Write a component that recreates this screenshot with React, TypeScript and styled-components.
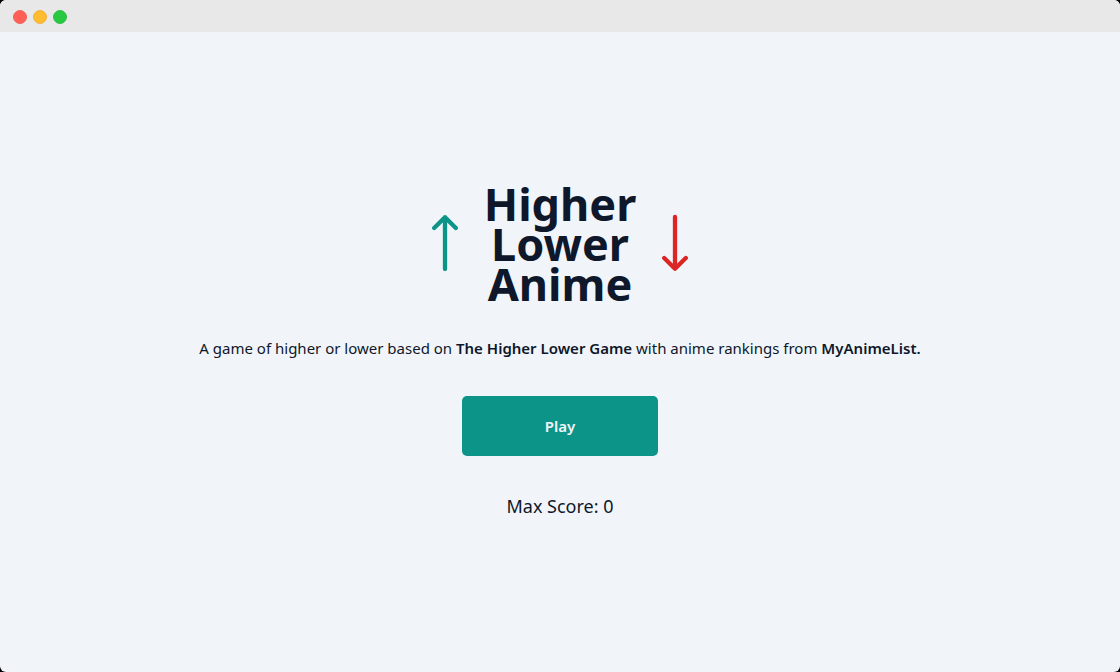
import React from "react";
import styled, { createGlobalStyle } from "styled-components";

const GlobalStyle = createGlobalStyle`
  *, *::before, *::after { box-sizing: border-box; }
  body {
    margin: 0;
    background: #000;
    color: #0f172a;
    font-family: "Noto Sans", sans-serif;
    font-size: 15px;
    line-height: 24px;
  }
`;

const Window = styled.div`
  display: flex;
  flex-direction: column;
  min-height: 100vh;
  border-radius: 6px;
  overflow: hidden;
  background: #f1f5f9;
`;

const TitleBar = styled.header`
  display: flex;
  align-items: center;
  gap: 6px;
  height: 32px;
  padding: 2px 13px 0;
  background: #e8e8e8;
`;

const Dot = styled.span<{ $fill: string; $edge: string }>`
  width: 14px;
  height: 14px;
  border-radius: 50%;
  background: ${(p) => p.$fill};
  border: 1px solid ${(p) => p.$edge};
`;

const Main = styled.main`
  flex: 1;
  display: flex;
  flex-direction: column;
  align-items: center;
  justify-content: center;
  gap: 36px;
  padding: 16px;
  text-align: center;
`;

const Intro = styled.section`
  display: flex;
  flex-direction: column;
  align-items: center;
  gap: 32px;
`;

const Hero = styled.div`
  display: flex;
  align-items: center;
  gap: 7px;
`;

const Title = styled.h1`
  display: flex;
  flex-direction: column;
  margin: 0;
  font-size: 45px;
  font-weight: 700;
  line-height: 40px;
`;

const Arrow = styled.svg<{ $color: string }>`
  width: 64px;
  height: 64px;
  fill: none;
  stroke: ${(p) => p.$color};
  stroke-width: 4.3;
  stroke-linecap: round;
  stroke-linejoin: round;
`;

const Text = styled.p`
  margin: 0;
`;

const SiteLink = styled.a`
  color: inherit;
  font-weight: 600;
  text-decoration: none;
`;

const PlayButton = styled.button`
  width: 196px;
  height: 60px;
  border: 0;
  border-radius: 5px;
  background: #0d9488;
  color: #f1f5f9;
  font: inherit;
  font-weight: 600;
  cursor: pointer;
`;

const Score = styled.p`
  margin: 0;
  font-size: 18px;
  line-height: 28px;
`;

export default function App() {
  return (
    <Window>
      <GlobalStyle />
      <TitleBar>
        <Dot $fill="#ff5f57" $edge="#f0645c" />
        <Dot $fill="#febc2e" $edge="#f0b23e" />
        <Dot $fill="#28c840" $edge="#32bf48" />
      </TitleBar>
      <Main>
        <Intro>
          <Hero>
            <Arrow $color="#0d9488" viewBox="0 0 64 64" aria-hidden="true">
              <path d="M21.2 16L32 5.2L42.8 16M32 5.2V57" />
            </Arrow>
            <Title>
              <span>Higher</span>
              <span>Lower</span>
              <span>Anime</span>
            </Title>
            <Arrow $color="#dc2626" viewBox="0 0 64 64" aria-hidden="true">
              <path d="M21.2 46L32 56.8L42.8 46M32 56.8V5" />
            </Arrow>
          </Hero>
          <Text>
            A game of higher or lower based on <SiteLink href="#higher-lower">The Higher Lower Game</SiteLink> with
            anime rankings from <SiteLink href="#myanimelist">MyAnimeList.</SiteLink>
          </Text>
        </Intro>
        <PlayButton type="button">Play</PlayButton>
        <Score>Max Score: 0</Score>
      </Main>
    </Window>
  );
}
